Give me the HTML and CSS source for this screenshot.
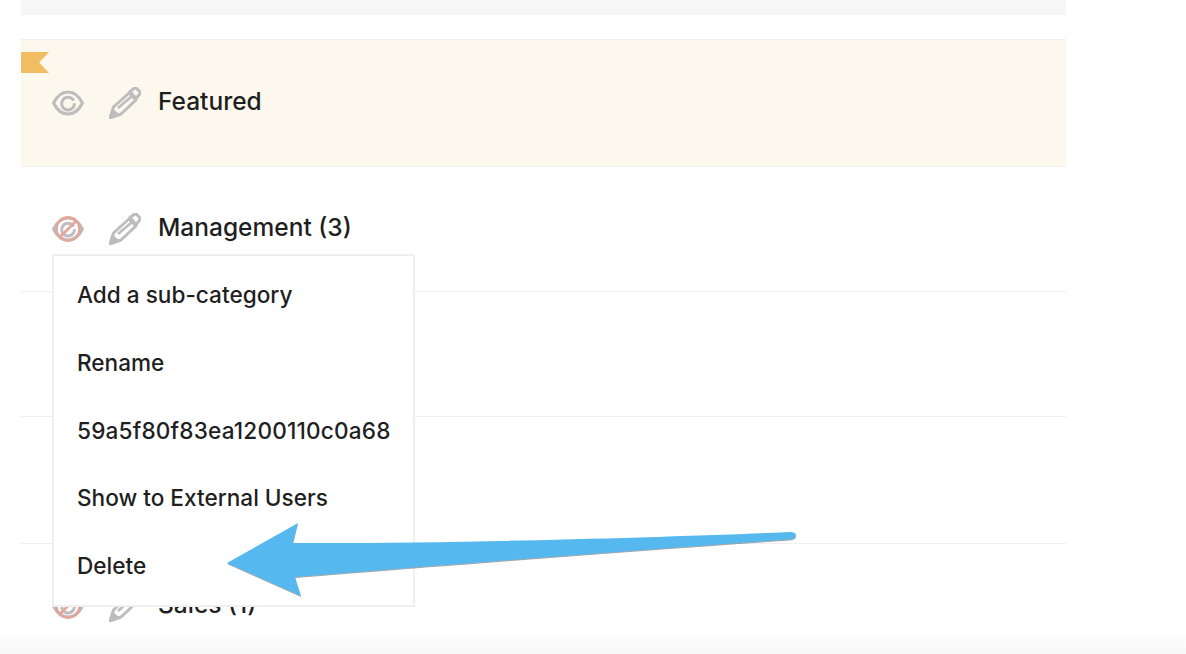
FILE: index.html
```html
<!DOCTYPE html>
<html lang="en">
<head>
<meta charset="utf-8">
<title>Categories</title>
<link rel="stylesheet" href="styles.css">
</head>
<body>
<svg class="defs" width="0" height="0" aria-hidden="true">
  <defs>
    <symbol id="eye" viewBox="0 0 32 26">
      <path d="M1.6 13C5 6 10 2 16 2s11 4 14.400 11C27 20 22 24 16 24S5 20 1.600 13Z" fill="none" stroke="currentColor" stroke-width="3.200" stroke-linejoin="round"/>
      <path d="M21 9.500A6.400 6.400 0 1 0 22.400 14.500" fill="none" stroke="currentColor" stroke-width="3" stroke-linecap="round"/>
    </symbol>
    <symbol id="pencil" viewBox="0 0 32 32">
      <path d="M1 31 4.500 20 20 6 27 13 12 27Z" fill="none" stroke="currentColor" stroke-width="3" stroke-linejoin="round"/>
      <path d="M0.500 31.500 3 21 11 28Z" fill="currentColor"/>
      <path d="M9 21 22.500 9.500" stroke="currentColor" stroke-width="2.600"/>
      <path d="M21 4.500 25 1.500a2.200 2.200 0 0 1 3 .2l2.500 2.800a2.200 2.200 0 0 1-.2 3L27 11.500Z" fill="none" stroke="currentColor" stroke-width="3" stroke-linejoin="round"/>
    </symbol>
  </defs>
</svg>
<main class="list">
  <div class="topbar"></div>
  <section class="row row-featured">
    <span class="ribbon"></span>
    <svg class="eye"><use href="#eye"/></svg>
    <svg class="pencil"><use href="#pencil"/></svg>
    <span class="name">Featured</span>
  </section>
  <section class="row row-management">
    <span class="eye-wrap">
      <svg class="eye"><use href="#eye"/></svg>
      <svg class="strike" viewBox="0 0 32 32"><circle cx="16" cy="16" r="11.600" fill="none" stroke="#e3a69c" stroke-width="2.600"/><path d="M8 24 24 8" stroke="#e3a69c" stroke-width="2.600"/></svg>
    </span>
    <svg class="pencil"><use href="#pencil"/></svg>
    <span class="name">Management (3)</span>
    <ul class="menu">
      <li>Add a sub-category</li>
      <li>Rename</li>
      <li class="hash">59a5f80f83ea1200110c0a68</li>
      <li>Show to External Users</li>
      <li>Delete</li>
    </ul>
  </section>
  <section class="row row-short"></section>
  <section class="row row-tall"></section>
  <section class="row row-sales">
    <span class="eye-wrap">
      <svg class="eye"><use href="#eye"/></svg>
      <svg class="strike" viewBox="0 0 32 32"><circle cx="16" cy="16" r="11.600" fill="none" stroke="#e3a69c" stroke-width="2.600"/><path d="M8 24 24 8" stroke="#e3a69c" stroke-width="2.600"/></svg>
    </span>
    <svg class="pencil"><use href="#pencil"/></svg>
    <span class="name">Sales (1)</span>
  </section>
</main>
<svg class="arrow" viewBox="0 0 580 90" width="580" height="90" aria-hidden="true">
  <defs>
    <filter id="arrow-shadow" x="-2%" y="-5%" width="104%" height="115%">
      <feDropShadow dx="0" dy="1" stdDeviation="0.7" flood-color="#555" flood-opacity="0.55"/>
    </filter>
  </defs>
  <path d="M3 41 74 1 69 21 C200 22 420 16 566 10 Q572 10 572 13.500 Q572 17 566 17.500 C400 29 220 43 71 55 L77 74Z" fill="#54b8ee" filter="url(#arrow-shadow)"/>
</svg>
<div class="fade"></div>
</body>
</html>
```
FILE: styles.css
```css
html, body {
  margin: 0;
  padding: 0;
  height: 654px;
  overflow: hidden;
  background: #fff;
  font-family: Inter, "Liberation Sans", sans-serif;
  color: #1f1f1f;
}
.defs { position: absolute; }
.list {
  width: 1045px;
  margin-left: 21px;
}
.topbar {
  height: 15px;
  margin-bottom: 24px;
  background: #f6f6f6;
}
.row {
  position: relative;
  box-sizing: border-box;
  height: 125px;
  padding: 47px 0 0 31px;
  border-top: 1px solid #f0f0f0;
  display: flex;
  align-items: flex-start;
}
.row-featured {
  height: 127px;
  background: #fcf8ee;
  border-top-color: #f0f1f0;
}
.row-management { padding-top: 46px; }
.row-short { height: 125px; }
.row-tall { height: 127px; }
.row-sales { height: 126px; padding-top: 46px; }
.ribbon {
  position: absolute;
  left: 0;
  top: 12px;
  width: 28px;
  height: 21px;
  background: #f0bd62;
  clip-path: polygon(0 0, 100% 0, 65% 50%, 100% 100%, 0 100%);
}
.eye, .eye-wrap {
  width: 32px;
  height: 26px;
  flex: none;
  color: #bdbdbd;
  margin-top: 3px;
}
.eye, .pencil, .strike { filter: blur(0.35px); }
.eye-wrap { position: relative; display: block; }
.eye-wrap .eye { display: block; margin-top: 0; }
.strike {
  position: absolute;
  left: 0;
  top: -3px;
  width: 32px;
  height: 32px;
}
.pencil {
  width: 32px;
  height: 32px;
  flex: none;
  color: #bdbdbd;
  margin-left: 25px;
}
.name {
  margin-left: 17px;
  margin-top: -1px;
  font-size: 24.500px;
  font-weight: 500;
  line-height: 30px;
  white-space: nowrap;
}
.menu {
  position: absolute;
  left: 31px;
  top: 87px;
  width: 363px;
  height: 353px;
  box-sizing: border-box;
  margin: 0;
  padding: 5px 0 0 23px;
  list-style: none;
  background: #fff;
  border: 2px solid #efefef;
  z-index: 2;
}
.menu li {
  height: 67.750px;
  line-height: 67.750px;
  font-size: 22.600px;
  font-weight: 500;
  white-space: nowrap;
}
.menu .hash { letter-spacing: 0.17px; }
.arrow {
  position: absolute;
  left: 224px;
  top: 522px;
  z-index: 3;
}
.fade {
  position: absolute;
  left: 0;
  right: 0;
  top: 628px;
  height: 26px;
  background: linear-gradient(#ffffff00, #f8f8f8);
  z-index: 4;
}
```
